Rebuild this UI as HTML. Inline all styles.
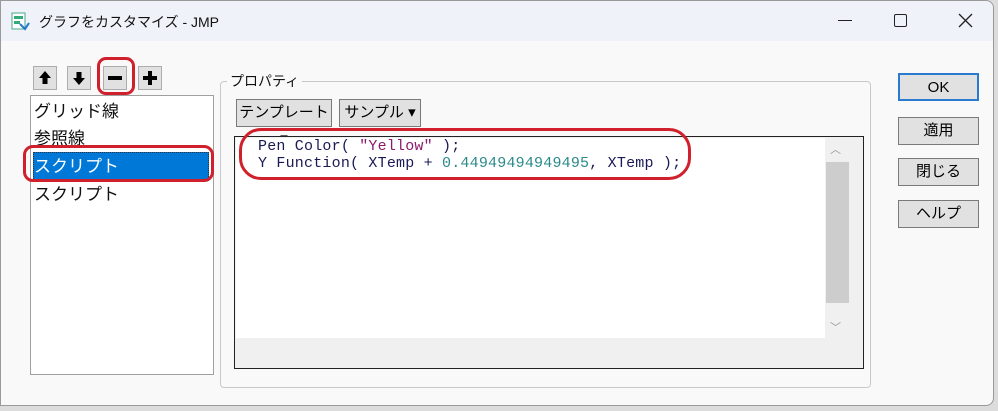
<!DOCTYPE html>
<html><head><meta charset="utf-8"><style>
*{box-sizing:border-box;margin:0;padding:0}
body{width:998px;height:411px;background:#dcdcdc;position:relative;overflow:hidden;font-family:"Liberation Sans","Noto Sans CJK JP",sans-serif}
.win{position:absolute;left:0;top:0;width:994px;height:406px;background:#f9f9f9;border:1px solid #9a9a9a;border-radius:0 8px 8px 0}
.title{position:absolute;left:0;top:0;width:100%;height:40px;background:#eff3f9;border-radius:0 8px 0 0}
.abs{position:absolute}
.btn{position:absolute;background:#e1e1e1;border:1px solid #7a7a7a;font-size:15px;text-align:center;color:#000}
.sq{position:absolute;width:24px;height:24px;background:#e1e1e1;border:1px solid #adadad}
.mono{font-family:"Liberation Mono","Noto Sans CJK JP",monospace;font-size:15px;color:#1a1a55;line-height:17px;white-space:pre;letter-spacing:0.2px}
.red{position:absolute;border:3px solid #d0202c}
</style></head><body>
<div class="win">
<div class="title"></div>
<svg class="abs" style="left:10px;top:11px" width="20" height="20"><rect x="1" y="1" width="13" height="16" fill="#fff" stroke="#4a8"/><rect x="3" y="4" width="9" height="3" fill="#3a7"/><rect x="3" y="9" width="6" height="3" fill="#3a7"/><path d="M9 12l5 5 4-6" stroke="#27c" stroke-width="2" fill="none"/></svg>
<div class="abs" style="left:38px;top:11px;font-size:14px;color:#111">グラフをカスタマイズ - JMP</div>
<div class="abs" style="left:837px;top:19px;width:14px;height:1px;background:#222"></div>
<div class="abs" style="left:893px;top:13px;width:13px;height:13px;border:1.5px solid #222;border-radius:2px"></div>
<svg class="abs" style="left:957px;top:12px" width="15" height="15"><path d="M1 1L14 14M14 1L1 14" stroke="#222" stroke-width="1.3"/></svg>

<div class="sq" style="left:32px;top:65px"><svg width="22" height="22"><path d="M11 4l6 7h-3.5v6h-5v-6h-3.5z" fill="#000"/></svg></div>
<div class="sq" style="left:66px;top:65px"><svg width="22" height="22"><path d="M11 18l6-7h-3.5v-6h-5v6h-3.5z" fill="#000"/></svg></div>
<div class="sq" style="left:102px;top:65px"><svg width="22" height="22"><rect x="4" y="9" width="14" height="4" fill="#000"/></svg></div>
<div class="sq" style="left:137px;top:65px"><svg width="22" height="22"><rect x="4" y="9" width="14" height="4" fill="#000"/><rect x="9" y="4" width="4" height="14" fill="#000"/></svg></div>
<div class="red" style="left:96px;top:56px;width:38px;height:38px;border-radius:9px"></div>

<div class="abs" style="left:29px;top:94px;width:184px;height:280px;background:#fff;border:1px solid #a0a0a0"></div>
<div class="abs" style="left:33px;top:97px;font-size:17px;line-height:27px;color:#111">グリッド線<br>参照線<br><span style="display:inline-block;width:176px;margin-left:-1px;background:#0078d7;color:#fff;border:1px dotted #333">スクリプト</span><br>スクリプト</div>
<div class="red" style="left:22px;top:144px;width:191px;height:37px;border-radius:10px"></div>

<div class="abs" style="left:219px;top:80px;width:651px;height:307px;border:1px solid #c8c8c8;border-radius:4px"></div>
<div class="abs" style="left:226px;top:70px;background:#f9f9f9;padding:0 3px;font-size:14px;color:#111">プロパティ</div>
<div class="btn" style="left:235px;top:98px;width:96px;height:28px;line-height:26px">テンプレート ▾</div>
<div class="btn" style="left:338px;top:98px;width:82px;height:28px;line-height:26px">サンプル ▾</div>

<div class="abs" style="left:233px;top:135px;width:630px;height:233px;border:1px solid #222;background:#f0f0f0"></div>
<div class="abs" style="left:235px;top:137px;width:589px;height:200px;background:#fff"></div>
<div class="abs" style="left:824px;top:137px;width:24px;height:200px;background:#f0f0f0"></div>
<div class="abs" style="left:825px;top:161px;width:23px;height:141px;background:#cdcdcd"></div>
<div class="abs" style="left:829px;top:140px;font-size:11px;color:#999">︿</div>
<div class="abs" style="left:829px;top:318px;font-size:11px;color:#999">﹀</div>
<div class="abs" style="left:235px;top:337px;width:613px;height:23px;background:#f0f0f0"></div>
<div class="abs mono" style="left:257px;top:137px">Pen Color( <span style="color:#8b1a6b">"Yellow"</span> );
Y Function( XTemp + <span style="color:#2a8a8a">0.44949494949495</span>, XTemp );</div>
<div class="red" style="left:238px;top:127px;width:452px;height:52px;border-radius:22px"></div>

<div class="btn" style="left:897px;top:72px;width:81px;height:28px;line-height:26px;border:2px solid #2a7ad0">OK</div>
<div class="btn" style="left:897px;top:116px;width:81px;height:28px;line-height:26px">適用</div>
<div class="btn" style="left:897px;top:157px;width:81px;height:28px;line-height:26px">閉じる</div>
<div class="btn" style="left:897px;top:199px;width:81px;height:28px;line-height:26px">ヘルプ</div>
</div>
</body></html>
